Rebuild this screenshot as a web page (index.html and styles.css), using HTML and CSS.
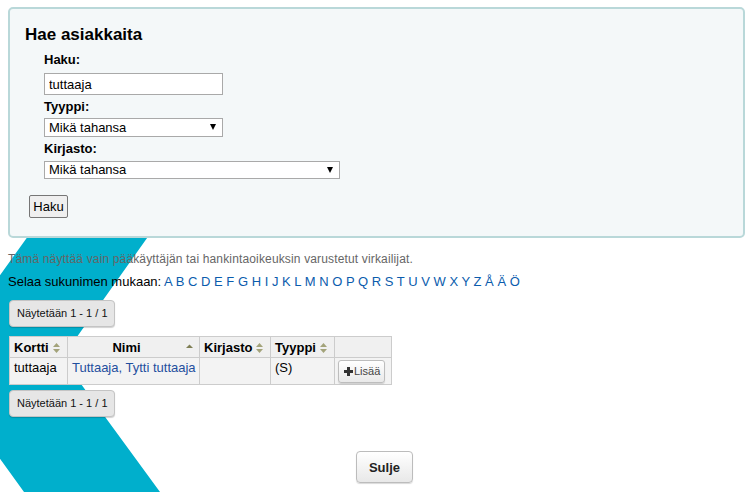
FILE: index.html
```html
<!DOCTYPE html>
<html lang="fi">
<head>
<meta charset="utf-8">
<title>Hae asiakkaita</title>
<link rel="stylesheet" href="styles.css">
</head>
<body>
<svg class="bg-shape" width="754" height="492" viewBox="0 0 754 492" aria-hidden="true">
  <polygon points="54,200 174,200 62,358 160,492 24,492 -66,367" fill="#00afcc"/>
</svg>
<div class="page">
  <form class="search-box">
    <h1 class="legend">Hae asiakkaita</h1>
    <div class="fields">
      <label class="field-label lbl-first">Haku:</label>
      <input class="text-input" type="text" value="tuttaaja">
      <label class="field-label">Tyyppi:</label>
      <span class="select sel-short">Mikä tahansa<span class="sel-arrow"></span></span>
      <label class="field-label">Kirjasto:</label>
      <span class="select sel-long">Mikä tahansa<span class="sel-arrow"></span></span>
    </div>
    <button type="button" class="btn-haku">Haku</button>
  </form>

  <p class="note">Tämä näyttää vain pääkäyttäjän tai hankintaoikeuksin varustetut virkailijat.</p>
  <p class="browse">Selaa sukunimen mukaan: <a href="#">A</a> <a href="#">B</a> <a href="#">C</a> <a href="#">D</a> <a href="#">E</a> <a href="#">F</a> <a href="#">G</a> <a href="#">H</a> <a href="#">I</a> <a href="#">J</a> <a href="#">K</a> <a href="#">L</a> <a href="#">M</a> <a href="#">N</a> <a href="#">O</a> <a href="#">P</a> <a href="#">Q</a> <a href="#">R</a> <a href="#">S</a> <a href="#">T</a> <a href="#">U</a> <a href="#">V</a> <a href="#">W</a> <a href="#">X</a> <a href="#">Y</a> <a href="#">Z</a> <a href="#">Å</a> <a href="#">Ä</a> <a href="#">Ö</a></p>

  <div class="pager"><span class="pg-btn">Näytetään 1 - 1 / 1</span></div>

  <table class="results">
    <colgroup>
      <col class="c1"><col class="c2"><col class="c3"><col class="c4"><col class="c5">
    </colgroup>
    <thead>
      <tr>
        <th class="th-left">Kortti<svg class="sort" width="7" height="10" viewBox="0 0 7 10"><polygon points="0,4 3.5,0 7,4"/><polygon points="0,6 7,6 3.5,10"/></svg></th>
        <th class="th-center">Nimi<svg class="sort asc" width="7" height="10" viewBox="0 0 7 10"><polygon points="0,6 3.5,2.5 7,6"/></svg></th>
        <th class="th-left">Kirjasto<svg class="sort" width="7" height="10" viewBox="0 0 7 10"><polygon points="0,4 3.5,0 7,4"/><polygon points="0,6 7,6 3.5,10"/></svg></th>
        <th class="th-left">Tyyppi<svg class="sort" width="7" height="10" viewBox="0 0 7 10"><polygon points="0,4 3.5,0 7,4"/><polygon points="0,6 7,6 3.5,10"/></svg></th>
        <th class="th-empty"></th>
      </tr>
    </thead>
    <tbody>
      <tr>
        <td>tuttaaja</td>
        <td><a href="#">Tuttaaja, Tytti tuttaaja</a></td>
        <td></td>
        <td>(S)</td>
        <td class="td-btn"><span class="btn-add"><svg class="plus" width="9" height="9" viewBox="0 0 9 9"><rect x="3" y="0" width="3" height="9"/><rect x="0" y="3" width="9" height="3"/></svg>Lisää</span></td>
      </tr>
    </tbody>
  </table>

  <div class="pager pager-bottom"><span class="pg-btn">Näytetään 1 - 1 / 1</span></div>

  <div class="close-row"><button type="button" class="btn-close">Sulje</button></div>
</div>
</body>
</html>
```
FILE: styles.css
```css
html, body {
  margin: 0;
  padding: 0;
  background: #ffffff;
}
body {
  font-family: "Liberation Sans", Arial, sans-serif;
  font-size: 13px;
  color: #000;
  position: relative;
  width: 754px;
  height: 492px;
  overflow: hidden;
}
.bg-shape {
  position: absolute;
  left: 0;
  top: 0;
  z-index: 0;
}
.page {
  position: relative;
  z-index: 1;
  padding: 7px 9px 0 8px;
}

/* search box */
.search-box {
  box-sizing: border-box;
  height: 231px;
  border: 2px solid #b9d8d9;
  border-radius: 5px;
  background: #f4f8f9;
  padding: 15px 0 0 0;
  margin: 0;
}
.legend {
  margin: 0 0 0 15px;
  font-size: 17px;
  line-height: 21px;
  font-weight: bold;
}
.fields {
  display: flex;
  flex-direction: column;
  align-items: flex-start;
  margin-left: 34px;
}
.field-label {
  font-weight: bold;
  font-size: 13px;
  line-height: 16px;
  margin-top: 4px;
  margin-bottom: 3px;
}
.lbl-first {
  margin-top: 7px;
  margin-bottom: 4px;
}
.text-input {
  box-sizing: border-box;
  width: 179px;
  height: 22px;
  margin: 1px 0 0 0;
  padding: 0 4px;
  border: 1px solid #a9a9a9;
  background: #fff;
  font-family: "Liberation Sans", Arial, sans-serif;
  font-size: 13px;
  color: #000;
  outline: none;
}
.select {
  position: relative;
  box-sizing: border-box;
  display: block;
  width: 179px;
  height: 19px;
  border: 1px solid #a9a9a9;
  background: #fff;
  padding: 0 0 0 4px;
  font-size: 13px;
  line-height: 17px;
  color: #000;
}
.sel-long {
  width: 296px;
  height: 18px;
  line-height: 16px;
  margin-top: 1px;
}
.sel-arrow {
  position: absolute;
  right: 6px;
  top: 5px;
  width: 0;
  height: 0;
  border-left: 3px solid transparent;
  border-right: 3px solid transparent;
  border-top: 6px solid #000;
}
.btn-haku {
  display: block;
  box-sizing: border-box;
  margin: 16px 0 0 19px;
  width: 39px;
  height: 23px;
  padding: 0;
  border: 1px solid #767676;
  border-radius: 2px;
  background: #efefef;
  font-family: "Liberation Sans", Arial, sans-serif;
  font-size: 13px;
  color: #000;
}

/* texts */
.note {
  margin: 13px 0 0 0;
  font-size: 12px;
  line-height: 16px;
  letter-spacing: 0.15px;
  color: #666;
}
.browse {
  margin: 6px 0 0 0;
  font-size: 13px;
  line-height: 17px;
  color: #000;
}
.browse a {
  color: #0b5cad;
  text-decoration: none;
}

/* pager */
.pager {
  display: flex;
  margin: 10px 0 0 1px;
}
.pager-bottom {
  margin-top: 5px;
}
.pg-btn {
  box-sizing: border-box;
  height: 27px;
  padding: 0 6px 0 7px;
  border: 1px solid #c4c4c4;
  border-radius: 4px;
  background: #e6e6e6;
  box-shadow: 0 1px 1px rgba(0, 0, 0, 0.18);
  font-size: 11px;
  line-height: 25px;
  color: #111;
}

/* table */
.results {
  margin: 9px 0 0 1px;
  border-collapse: collapse;
  table-layout: fixed;
  width: 382px;
}
.c1 { width: 58px; }
.c2 { width: 132px; }
.c3 { width: 71px; }
.c4 { width: 64px; }
.c5 { width: 57px; }
.results th,
.results td {
  border: 1px solid #cccccc;
  font-size: 13px;
  line-height: 15px;
  vertical-align: top;
  white-space: nowrap;
}
.results th {
  background: #f0f0f0;
  font-weight: bold;
  padding: 3px 4px 2px 4px;
  text-align: left;
}
.results th.th-center {
  text-align: center;
  padding-right: 18px;
  position: relative;
}
.results td {
  background: #f3f3f3;
  padding: 2px 4px;
}
.results td a {
  color: #1f4f9e;
  text-decoration: none;
}
.sort {
  fill: #a3a37a;
  margin-left: 4px;
  vertical-align: -1px;
}
.th-center .sort {
  position: absolute;
  right: 6px;
  top: 5px;
  fill: #7f7f55;
}
.results td.td-btn {
  padding: 2px 3px 1px 3px;
}
.btn-add {
  display: inline-flex;
  align-items: center;
  box-sizing: border-box;
  height: 23px;
  padding: 0 4px 0 5px;
  border: 1px solid #bdbdbd;
  border-radius: 3px;
  background: linear-gradient(#ffffff, #e9e9e9);
  box-shadow: 0 1px 1px rgba(0, 0, 0, 0.15);
  font-size: 11px;
  color: #444;
}
.plus {
  fill: #333;
  margin-right: 1px;
}

/* close */
.close-row {
  display: flex;
  justify-content: center;
  padding-left: 16px;
  margin-top: 34px;
}
.btn-close {
  box-sizing: border-box;
  width: 57px;
  height: 32px;
  padding: 0;
  border: 1px solid #bcbcbc;
  border-radius: 4px;
  background: linear-gradient(#ffffff, #e8e8e8);
  box-shadow: 0 1px 1px rgba(0, 0, 0, 0.15);
  font-family: "Liberation Sans", Arial, sans-serif;
  font-size: 13px;
  font-weight: bold;
  color: #222;
}
```
